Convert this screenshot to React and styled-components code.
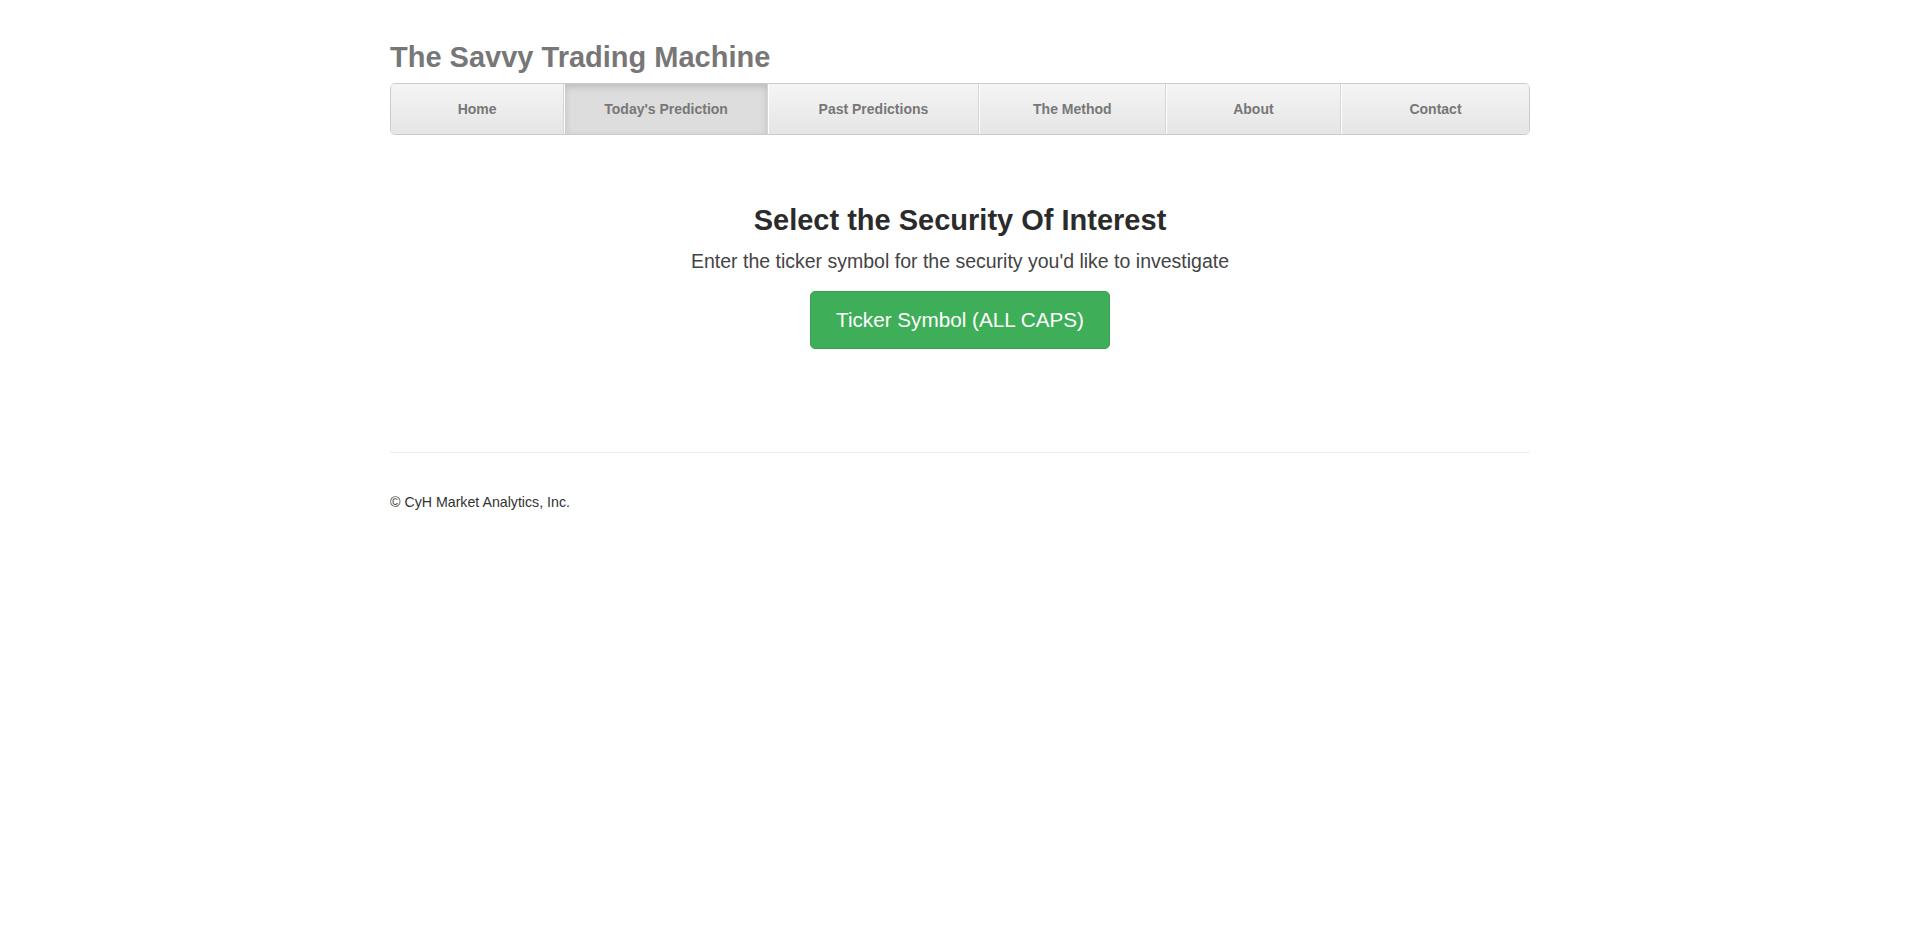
import React from 'react';
import styled, { createGlobalStyle } from 'styled-components';

const GlobalStyle = createGlobalStyle`
    html, body {
        margin: 0;
        padding: 0;
        background: #fff;
    }
    body {
        font-family: "Liberation Sans", Arial, sans-serif;
        font-size: 14px;
        line-height: 1.42857;
        color: #333;
    }
`;

const Container = styled.div`
    width: 1170px;
    box-sizing: border-box;
    margin: 0 auto;
    padding: 42px 15px 0;
`;

const Title = styled.h3`
    margin: 0 0 9px;
    font-size: 29px;
    font-weight: 700;
    line-height: 1.1;
    color: #777;
`;

const Nav = styled.ul`
    display: flex;
    margin: 0;
    padding: 0;
    list-style: none;
    background-color: #eee;
    border: 1px solid #ccc;
    border-radius: 5px;
    overflow: hidden;
`;

const NavItem = styled.li`
    flex: ${p => p.$w} 1 0;
    display: flex;
    align-items: center;
    justify-content: center;
    box-sizing: border-box;
    height: 50px;
    padding-top: 2px;
    font-size: 14px;
    font-weight: 700;
    color: #777;
    border-left: 1px solid #fff;
    border-right: 1px solid #d5d5d5;
    background-color: ${p => (p.$active ? '#ddd' : '#e5e5e5')};
    background-image: ${p => (p.$active ? 'none' : 'linear-gradient(to bottom, #f5f5f5 0%, #e5e5e5 100%)')};
    box-shadow: ${p => (p.$active ? 'inset 0 3px 7px rgba(0, 0, 0, .15)' : 'none')};
    &:first-child {
        border-left: 0;
    }
    &:last-child {
        border-right: 0;
    }
`;

const Jumbo = styled.div`
    display: flex;
    flex-direction: column;
    align-items: center;
    padding-top: 70px;
    text-align: center;
`;

const Heading = styled.h1`
    margin: 0;
    font-size: 29px;
    font-weight: 700;
    line-height: 1.1;
    color: #2b2b2b;
`;

const Lead = styled.p`
    margin: 10px 0 16px;
    font-size: 19.5px;
    font-weight: 400;
    line-height: 28px;
    color: #444;
`;

const TickerButton = styled.button`
    box-sizing: border-box;
    width: 300px;
    height: 58px;
    padding: 0 20px;
    font-family: "Liberation Sans", Arial, sans-serif;
    font-size: 20.7px;
    line-height: 26px;
    color: #fff;
    background-color: #3fae59;
    border: 1px solid #3aa353;
    border-radius: 5px;
    cursor: pointer;
`;

const Divider = styled.hr`
    margin: 103px 0 0;
    border: 0;
    border-top: 1px solid #eee;
`;

const Footer = styled.footer`
    padding-top: 39px;
    p {
        margin: 0;
        font-size: 14.2px;
        line-height: 20px;
        color: #333;
    }
`;

const links = [
    { label: 'Home', w: 174 },
    { label: "Today's Prediction", w: 204, active: true },
    { label: 'Past Predictions', w: 211 },
    { label: 'The Method', w: 187 },
    { label: 'About', w: 175 },
    { label: 'Contact', w: 189 },
];

const App = () => {
    return (
        <>
            <GlobalStyle />
            <Container>
                <Title>The Savvy Trading Machine</Title>
                <Nav>
                    {links.map(l => (
                        <NavItem key={l.label} $w={l.w} $active={l.active}>
                            {l.label}
                        </NavItem>
                    ))}
                </Nav>
                <Jumbo>
                    <Heading>Select the Security Of Interest</Heading>
                    <Lead>Enter the ticker symbol for the security you'd like to investigate</Lead>
                    <TickerButton>Ticker Symbol (ALL CAPS)</TickerButton>
                </Jumbo>
                <Divider />
                <Footer>
                    <p>© CyH Market Analytics, Inc.</p>
                </Footer>
            </Container>
        </>
    );
};

export default App;
